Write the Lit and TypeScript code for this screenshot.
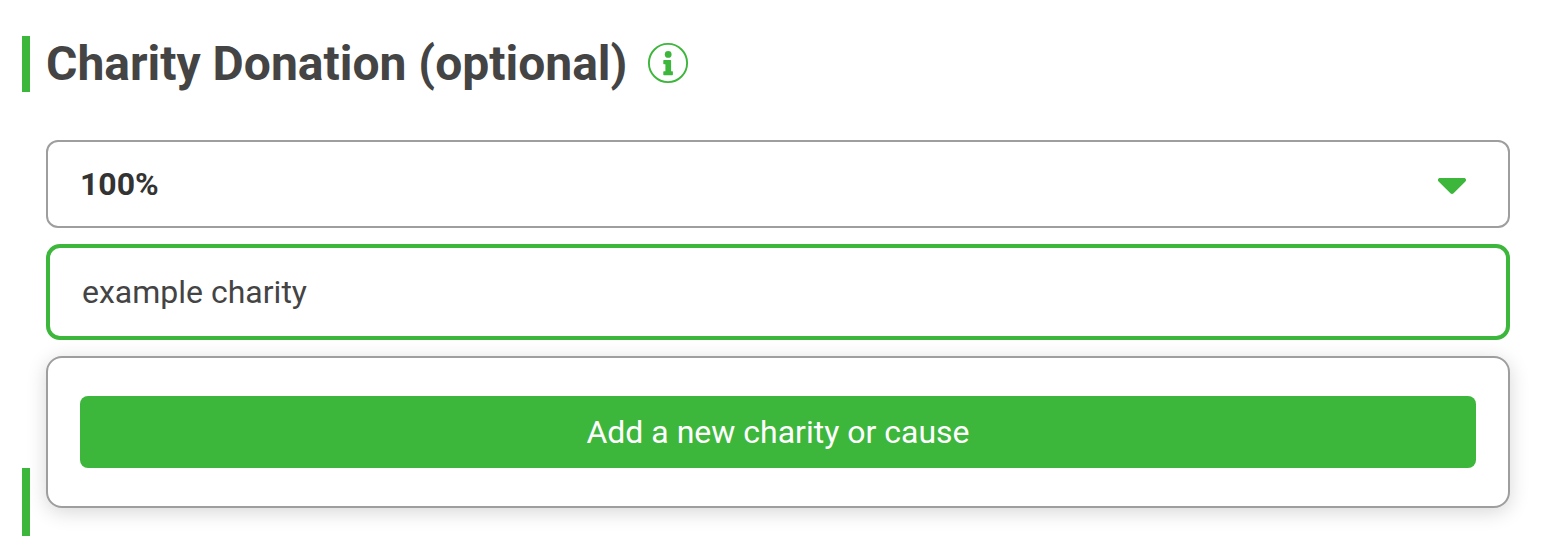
import { LitElement, html, css } from "lit";
import { customElement } from "lit/decorators.js";

@customElement("app-root")
export class AppRoot extends LitElement {
  static styles = css`
    :host { display: block; height: 536px; overflow: hidden; background: #fff; font-family: Roboto, sans-serif; color: #444; }
    * { box-sizing: border-box; }
    .page { display: flex; flex-direction: column; padding: 36px 36px 0 22px; height: 536px; }
    .heading { display: flex; align-items: center; height: 56px; flex: none; border-left: 8px solid #3db63c; padding-left: 16px; margin-bottom: 48px; }
    h2 { margin: 0; font-size: 48px; line-height: 56px; font-weight: 700; white-space: nowrap; }
    .info { display: block; margin: 0 0 2px 20px; width: 42px; height: 42px; }
    .fields { display: flex; flex-direction: column; margin-left: 24px; gap: 16px; }
    .select { display: flex; align-items: center; justify-content: space-between; height: 88px; border: 2px solid #9e9e9e; border-radius: 12px; padding: 0 41px 0 32px; font-size: 32px; font-weight: 700; color: #333; }
    .caret { display: block; margin-top: 4px; }
    .entry { display: flex; align-items: center; height: 96px; border: 4px solid #3db63c; border-radius: 14px; padding: 0 32px; font-size: 32px; }
    .menu { height: 152px; border: 2px solid #9e9e9e; border-radius: 16px; padding: 38px 32px; background: #fff; box-shadow: 0 4px 20px rgba(0,0,0,.16); }
    button { display: block; width: 100%; height: 72px; border: 0; border-radius: 8px; background: #3db63c; color: #fff; font: 400 32px/72px Roboto, sans-serif; padding: 0; }
    .next { width: 8px; height: 68px; flex: none; background: #3db63c; margin-top: -40px; }
  `;
  render() {
    return html`<main class="page">
      <div class="heading"><h2>Charity Donation (optional)</h2>
        <svg class="info" viewBox="0 0 42 42"><circle cx="21" cy="21" r="19.1" fill="none" stroke="#3db63c" stroke-width="1.9"/><circle cx="21.2" cy="12.4" r="3.4" fill="#3db63c"/><path d="M17 18h6.5q.6 0 .6.5v10.7h1.2q.6 0 .6.6v2.8q0 .6-.6.6h-8.4q-.6 0-.6-.6v-2.8q0-.6.6-.6h1.5v-7h-1.5q-.6 0-.6-.6v-3q0-.6.7-.6z" fill="#3db63c"/></svg>
      </div>
      <div class="fields">
        <div class="select"><span>100%</span><svg class="caret" width="30" height="18" viewBox="0 0 30 18"><path d="M3.2 1h23.6C29.2 1 29.6 3.4 28.4 4.6L16.6 16.2q-1.6 1.6-3.2 0L1.6 4.6C.4 3.4.8 1 3.2 1z" fill="#3db63c"/></svg></div>
        <div class="entry">example charity</div>
        <div class="menu"><button>Add a new charity or cause</button></div>
      </div>
      <div class="next"></div>
    </main>`;
  }
}
